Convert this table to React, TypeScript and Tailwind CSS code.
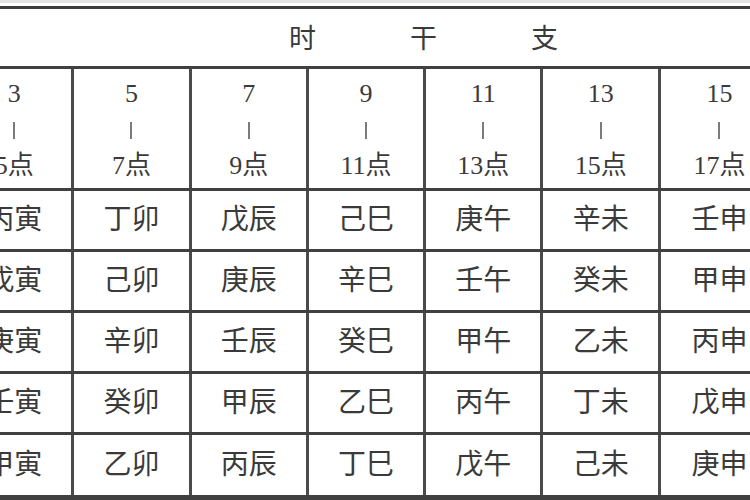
import React from "react";

const hours = [
  ["3", "5"],
  ["5", "7"],
  ["7", "9"],
  ["9", "11"],
  ["11", "13"],
  ["13", "15"],
  ["15", "17"],
];

const rows = [
  ["丙寅", "丁卯", "戊辰", "己巳", "庚午", "辛未", "壬申"],
  ["戊寅", "己卯", "庚辰", "辛巳", "壬午", "癸未", "甲申"],
  ["庚寅", "辛卯", "壬辰", "癸巳", "甲午", "乙未", "丙申"],
  ["壬寅", "癸卯", "甲辰", "乙巳", "丙午", "丁未", "戊申"],
  ["甲寅", "乙卯", "丙辰", "丁巳", "戊午", "己未", "庚申"],
];

const font = {
  fontFamily: '"Liberation Serif", "Noto Sans CJK SC", serif',
};

export default function App() {
  return (
    <div
      className="w-[750px] h-[500px] overflow-hidden bg-white text-[#3a3a3a] flex flex-col"
      style={font}
    >
      <div className="h-[3px] bg-[#e2e2e2] shrink-0" />
      <div className="h-[3px] bg-white shrink-0" />
      <div className="h-[3px] bg-[#3c3c3c] shrink-0" />
      <div className="h-[60px] shrink-0 border-b-[3px] border-[#404040] flex items-center pl-[289px] pt-[4px] text-[27px] gap-[94px]">
        <span>时</span>
        <span>干</span>
        <span>支</span>
      </div>
      <div className="h-[122px] shrink-0 border-b-[3px] border-[#404040] flex ml-[-43px]">
        {hours.map(([a, b], i) => (
          <div
            key={i}
            className={`w-[117.3px] shrink-0 flex flex-col items-center justify-center pt-[3px] text-[26px] ${
              i < 6 ? "border-r-[3px] border-[#4a4a4a]" : ""
            }`}
          >
            <div className="h-[36px] leading-[36px]">{a}</div>
            <div className="h-[36px] flex items-center justify-center">
              <span className="block w-[2px] h-[17px] bg-[#7a7a7a]" />
            </div>
            <div className="h-[36px] leading-[36px]">{b}点</div>
          </div>
        ))}
      </div>
      {rows.map((r, ri) => (
        <div
          key={ri}
          className={`shrink-0 flex ml-[-43px] border-[#404040] ${
            ri < 4 ? "h-[61px] border-b-[3px]" : "h-[65px] border-b-[5px]"
          }`}
        >
          {r.map((t, i) => (
            <div
              key={i}
              className={`w-[117.3px] shrink-0 flex items-center justify-center text-[28px] ${
                i < 6 ? "border-r-[3px] border-[#4a4a4a]" : ""
              }`}
            >
              {t}
            </div>
          ))}
        </div>
      ))}
    </div>
  );
}
